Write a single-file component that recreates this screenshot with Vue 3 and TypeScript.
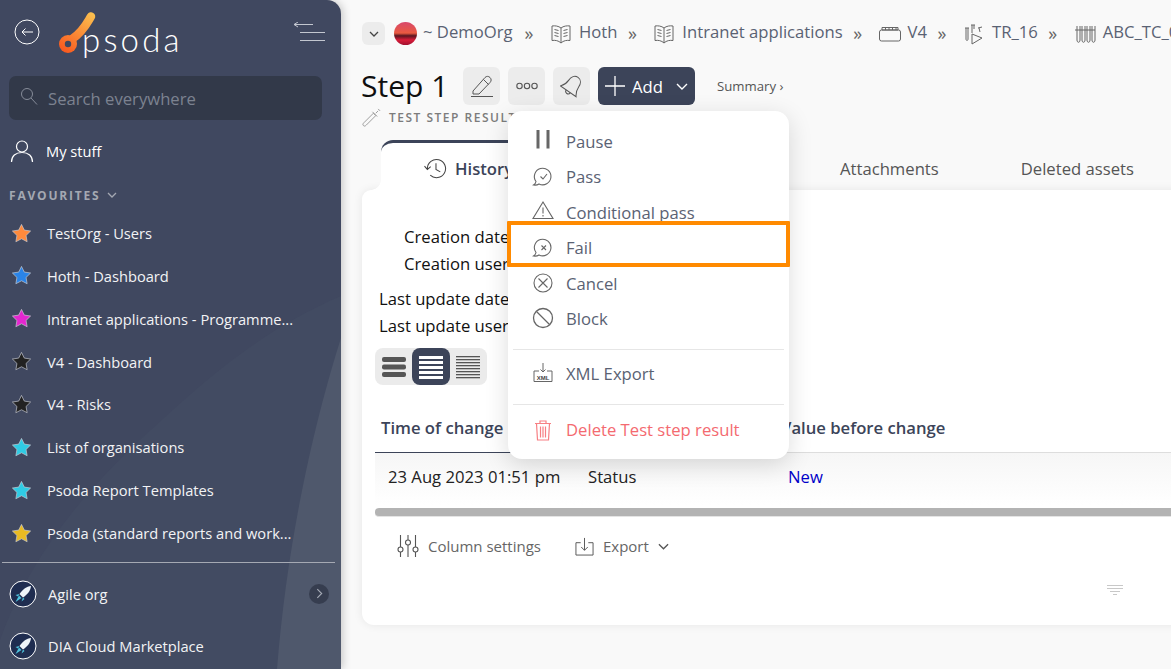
<script setup lang="ts">
interface Fav { label: string; color: string }
interface Crumb { label: string; icon: string }
interface MenuItem { label: string; icon: string }

const favourites: Fav[] = [
  { label: 'TestOrg - Users', color: '#ff8a3c' },
  { label: 'Hoth - Dashboard', color: '#2a84e8' },
  { label: 'Intranet applications - Programme...', color: '#e526d0' },
  { label: 'V4 - Dashboard', color: '#222222' },
  { label: 'V4 - Risks', color: '#222222' },
  { label: 'List of organisations', color: '#2fcbe4' },
  { label: 'Psoda Report Templates', color: '#2fcbe4' },
  { label: 'Psoda (standard reports and work...', color: '#eabb22' },
]
const crumbs: Crumb[] = [
  { label: 'Hoth', icon: 'book' },
  { label: 'Intranet applications', icon: 'book' },
  { label: 'V4', icon: 'box' },
  { label: 'TR_16', icon: 'run' },
  { label: 'ABC_TC_001', icon: 'tubes' },
]
const statusItems: MenuItem[] = [
  { label: 'Pause', icon: 'pause' },
  { label: 'Pass', icon: 'pass' },
  { label: 'Conditional pass', icon: 'warn' },
  { label: 'Fail', icon: 'fail' },
  { label: 'Cancel', icon: 'cancel' },
  { label: 'Block', icon: 'block' },
]
const orgs: string[] = ['Agile org', 'DIA Cloud Marketplace']
const starPath = 'M12 2.500L14.940 8.450L21.510 9.410L16.760 14.050L17.880 20.590L12 17.500L6.120 20.590L7.240 14.050L2.490 9.410L9.060 8.450Z'
const bubblePath = 'M5 16.500A8.300 8.300 0 1 1 8 19C6.500 20 4.500 20.300 2.500 20C4 19 4.800 18 5 16.500Z'
</script>

<template>
  <div class="page">
    <aside class="sidebar">
      <svg class="side-art" viewBox="0 0 341 669" aria-hidden="true">
        <path d="M341 296C250 335 190 395 140 440C70 505 25 570 0 640V669H341Z" fill="#424b62" />
        <path d="M341 338C318 410 288 530 277 669H341Z" fill="#4f586c" />
      </svg>
      <div class="side-content">
        <header class="brand">
          <svg class="back" viewBox="0 0 26 26" width="26" height="26">
            <circle cx="13" cy="13" r="12" fill="none" stroke="#fff" stroke-width="1" />
            <path d="M19 13H8M11.500 9.500L8 13l3.500 3.500" fill="none" stroke="#fff" stroke-width="1" />
          </svg>
          <div class="logo">
            <svg viewBox="0 0 40 46" width="40" height="46">
              <defs>
                <linearGradient id="logoGrad" gradientUnits="userSpaceOnUse" x1="34" y1="3" x2="6" y2="42">
                  <stop offset="0" stop-color="#fbc04f" />
                  <stop offset="1" stop-color="#f9591f" />
                </linearGradient>
              </defs>
              <path d="M33 6.500C29 13 25 22 14 29" fill="none" stroke="url(#logoGrad)" stroke-width="8.500" stroke-linecap="round" />
              <circle cx="10" cy="34" r="9" fill="url(#logoGrad)" />
              <circle cx="10" cy="34" r="3.200" fill="#404860" />
            </svg>
            <span class="wordmark">psoda</span>
          </div>
          <svg class="collapse" viewBox="0 0 32 20" width="32" height="20">
            <path d="M1 2.500H20M1 2.500l4-2.500M1 2.500l4 2.500M7 10.500H32M7 18.500H32" fill="none" stroke="#c3c7d0" stroke-width="1" />
          </svg>
        </header>

        <div class="search">
          <svg viewBox="0 0 18 18" width="18" height="18">
            <circle cx="7" cy="7" r="5.500" fill="none" stroke="#868c99" stroke-width="1" />
            <path d="M11 11l6 6.500" stroke="#868c99" stroke-width="1" />
          </svg>
          <span>Search everywhere</span>
        </div>

        <div class="mystuff">
          <svg viewBox="0 0 24 24" width="24" height="24">
            <circle cx="12" cy="7.500" r="5.500" fill="none" stroke="#fff" stroke-width="1.200" />
            <path d="M1.500 23c0-6 4-9.500 10.500-9.500S22.500 17 22.500 23" fill="none" stroke="#fff" stroke-width="1.200" />
          </svg>
          <span>My stuff</span>
        </div>

        <div class="fav-title">
          FAVOURITES
          <svg viewBox="0 0 10 6" width="10" height="6"><path d="M1 1l4 4 4-4" fill="none" stroke="#a4a8b2" stroke-width="1.300" /></svg>
        </div>

        <ul class="favs">
          <li v-for="f in favourites" :key="f.label">
            <svg viewBox="0 0 24 24" width="23" height="23">
              <path :d="starPath" :fill="f.color" stroke="#c9ccd3" stroke-width="0.700" stroke-linejoin="round" />
            </svg>
            <span>{{ f.label }}</span>
          </li>
        </ul>

        <div class="side-rule"></div>

        <div v-for="(o, i) in orgs" :key="o" class="org">
          <svg viewBox="0 0 28 28" width="28" height="28">
            <circle cx="14" cy="14" r="13" fill="#1f2d50" stroke="#fff" stroke-width="1" />
            <path d="M22 6c-4.500 .5-8 3-11.500 8l3.500 3.500c5-3.500 7.500-7 8-11.500z" fill="#eef4f8" />
            <path d="M10.500 14l-4 1 2.500 1.500zM14 17.500l-1.500 4 3-2.500zM10 15.500l2.500 2.500-6 4z" fill="#4ec3dd" />
          </svg>
          <span>{{ o }}</span>
          <span v-if="i === 0" class="org-more">
            <svg viewBox="0 0 8 12" width="7" height="11"><path d="M1.500 1l5 5-5 5" fill="none" stroke="#a6abb6" stroke-width="1.300" /></svg>
          </span>
        </div>
      </div>
    </aside>

    <main class="main">
      <nav class="crumbs">
        <button class="crumb-toggle" type="button">
          <svg viewBox="0 0 10 6" width="10" height="6"><path d="M1 1l4 4 4-4" fill="none" stroke="#444" stroke-width="1.300" /></svg>
        </button>
        <span class="org-avatar"></span>
        <span class="crumb-label first">~ DemoOrg</span>
        <template v-for="c in crumbs" :key="c.label">
          <span class="crumb-sep">»</span>
          <svg class="crumb-icon" viewBox="0 0 22 22" width="22" height="22" fill="none" stroke="#666" stroke-width="1">
            <template v-if="c.icon === 'book'">
              <path d="M11 5C8.500 3 5 2.500 2 3V17.500C5 17 8.500 17.500 11 20C13.500 17.500 17 17 20 17.500V3C17 2.500 13.500 3 11 5ZM11 5V20" />
              <path d="M4.500 6.500L8.500 7.500M4.500 9.500L8.500 10.500M4.500 12.500L8.500 13.500M17.500 6.500L13.500 7.500M17.500 9.500L13.500 10.500M17.500 12.500L13.500 13.500" />
            </template>
            <template v-else-if="c.icon === 'box'">
              <rect x="0.500" y="7" width="21" height="11" rx="2" />
              <path d="M3 4.500H19V7H3ZM6.500 4.500V7M10 4.500V7M13.500 4.500V7M17 4.500V7" />
            </template>
            <template v-else-if="c.icon === 'run'">
              <path d="M2 5H6M3 5V16C3 18 5 18 5 16V5M8 2H12M9 2V10M11 2V6M15 5L19 4M16 5L17 9" />
              <path d="M9 11V21L19 15Z" />
            </template>
            <template v-else>
              <path d="M1 7H21M3 3V17C3 20 6 20 6 17V3M8 3V17C8 20 11 20 11 17V3M13 3V17C13 20 16 20 16 17V3M18 3V17C18 20 21 20 21 17V3" />
            </template>
          </svg>
          <span class="crumb-label">{{ c.label }}</span>
        </template>
      </nav>

      <div class="title-row">
        <h1>Step 1</h1>
        <button class="tool first" type="button">
          <svg viewBox="0 0 24 24" width="24" height="24" fill="none" stroke="#555" stroke-width="1">
            <path d="M3 17L15 3.500C16.500 2 18.500 2 20 3.500C21.500 5 21.500 7 20 8.500L9 20H3ZM13.500 5.500L18.500 10.500M1 22.500H23" />
          </svg>
        </button>
        <button class="tool" type="button">
          <svg viewBox="0 0 22 8" width="22" height="8" fill="none" stroke="#555" stroke-width="1.100">
            <circle cx="3.500" cy="4" r="2.700" /><circle cx="11" cy="4" r="2.700" /><circle cx="18.500" cy="4" r="2.700" />
          </svg>
        </button>
        <button class="tool" type="button">
          <svg viewBox="0 0 24 24" width="24" height="24" fill="none" stroke="#555" stroke-width="1">
            <g transform="rotate(35 12 12)">
              <path d="M12 1.500C8 1.500 6 5 6 9C6 13.500 4.500 16 2.500 18.500H21.500C19.500 16 18 13.500 18 9C18 5 16 1.500 12 1.500Z" />
              <path d="M9.500 18.500C9.500 22 14.500 22 14.500 18.500" />
            </g>
          </svg>
        </button>
        <button class="add" type="button">
          <svg viewBox="0 0 20 20" width="20" height="20"><path d="M10 0V20M0 10H20" stroke="#fff" stroke-width="1.300" /></svg>
          <span>Add</span>
          <svg viewBox="0 0 12 7" width="12" height="7"><path d="M1 1l5 5 5-5" fill="none" stroke="#fff" stroke-width="1.400" /></svg>
        </button>
        <span class="summary">Summary ›</span>
      </div>

      <div class="subtitle">
        <svg viewBox="0 0 20 20" width="19" height="19" fill="none" stroke="#999" stroke-width="1">
          <path d="M1.500 18.500C.5 17.500 1 16.500 2 15.500L12 5.500L14.500 8L4.500 18C3.500 19 2.500 19.500 1.500 18.500ZM11 4L16 9M14.500 5.500L17 3M17 1L19 3" />
        </svg>
        <span>TEST STEP RESULT</span>
      </div>

      <div class="tabs">
        <div class="tab active">
          <svg viewBox="0 0 24 24" width="23" height="23" fill="none" stroke="#444" stroke-width="1.100">
            <path d="M3.500 12A9.500 9.500 0 1 1 6.500 19M.5 9.500L3.500 13L7 10M12.500 6.500V13L17 15.500" />
          </svg>
          <span>History</span>
        </div>
        <div class="tab-plain attach">Attachments</div>
        <div class="tab-plain deleted">Deleted assets</div>
      </div>

      <section class="card">
        <div class="facts">
          <div class="fact-group">
            <div>Creation date</div>
            <div>Creation user</div>
          </div>
          <div class="fact-group">
            <div>Last update date</div>
            <div>Last update user</div>
          </div>
        </div>

        <div class="density">
          <button type="button" class="d-btn">
            <svg viewBox="0 0 24 24" width="24" height="24" fill="#555"><rect y="2" width="24" height="5" rx="2" /><rect y="9.500" width="24" height="5" rx="2" /><rect y="17" width="24" height="5" rx="2" /></svg>
          </button>
          <button type="button" class="d-btn on">
            <svg viewBox="0 0 24 24" width="24" height="24" fill="#fff"><rect y="1" width="24" height="3" /><rect y="6" width="24" height="3" /><rect y="11" width="24" height="3" /><rect y="16" width="24" height="3" /><rect y="21" width="24" height="3" /></svg>
          </button>
          <button type="button" class="d-btn">
            <svg viewBox="0 0 24 24" width="24" height="24" fill="#555"><rect y="1" width="24" height="1.300" /><rect y="4" width="24" height="1.300" /><rect y="7" width="24" height="1.300" /><rect y="10" width="24" height="1.300" /><rect y="13" width="24" height="1.300" /><rect y="16" width="24" height="1.300" /><rect y="19" width="24" height="1.300" /><rect y="22" width="24" height="1.300" /></svg>
          </button>
        </div>

        <div class="thead">
          <div>Time of change</div>
          <div></div>
          <div>Value before change</div>
        </div>
        <div class="trow">
          <div>23 Aug 2023 01:51 pm</div>
          <div>Status</div>
          <div class="link">New</div>
        </div>
        <div class="scrollbar"></div>

        <div class="table-tools">
          <span class="tt settings">
            <svg viewBox="0 0 22 24" width="22" height="24" fill="none" stroke="#555" stroke-width="1.100">
              <path d="M3.500 1V13M3.500 18V23M11 1V6M11 11V23M18.500 1V13M18.500 18V23" />
              <circle cx="3.500" cy="15.500" r="2.500" /><circle cx="11" cy="8.500" r="2.500" /><circle cx="18.500" cy="15.500" r="2.500" />
            </svg>
            Column settings
          </span>
          <span class="tt">
            <svg viewBox="0 0 20 20" width="19" height="19" fill="none" stroke="#555" stroke-width="1">
              <path d="M6 6H1V19H19V6H14M10 1V14M6.500 10.500L10 14L13.500 10.500" />
            </svg>
            Export
            <svg viewBox="0 0 12 7" width="11" height="7"><path d="M1 1l5 5 5-5" fill="none" stroke="#555" stroke-width="1.400" /></svg>
          </span>
        </div>
        <div class="filter-row">
          <svg viewBox="0 0 16 12" width="16" height="12"><path d="M0 1.500H16M0 4.500H16M3 7.500H13M6 10.500H10" stroke="#c8c8c8" stroke-width="1" /></svg>
        </div>
      </section>

      <div class="menu">
        <div class="menu-group">
          <div v-for="m in statusItems" :key="m.label" class="menu-item">
            <svg class="menu-icon" viewBox="0 0 24 24" width="24" height="24" fill="none" stroke="#666" stroke-width="1.100">
              <path v-if="m.icon === 'pause'" d="M7 1V19.500M17 1V19.500" stroke-width="3" />
              <template v-else-if="m.icon === 'pass'">
                <path :d="bubblePath" />
                <path d="M9.500 11.500L12 14L16 9" />
              </template>
              <template v-else-if="m.icon === 'warn'">
                <path d="M12 2L22 18.500H2Z" />
                <path d="M12 7.500V13.500M12 15V16.500" />
              </template>
              <template v-else-if="m.icon === 'fail'">
                <path :d="bubblePath" />
                <path d="M10.500 9.500L15 14M15 9.500L10.500 14" />
              </template>
              <template v-else-if="m.icon === 'cancel'">
                <circle cx="12" cy="12" r="9" />
                <path d="M7.500 7.500L16.500 16.500M16.500 7.500L7.500 16.500" />
              </template>
              <template v-else>
                <circle cx="12" cy="12" r="9.500" stroke-width="1.300" />
                <path d="M5.500 5.500L18.500 18.500" stroke-width="1.300" />
              </template>
            </svg>
            <span>{{ m.label }}</span>
          </div>
        </div>
        <hr />
        <div class="menu-item solo">
          <svg class="menu-icon" viewBox="0 0 24 24" width="24" height="24" fill="none" stroke="#666" stroke-width="1">
            <path d="M8 9H3V19.500H21V9H16M12 1V10M9.500 7.500L12 10L14.500 7.500" />
            <text x="12" y="17.500" text-anchor="middle" font-size="6" font-weight="700" fill="#444" stroke="none" font-family="Liberation Sans, sans-serif">XML</text>
          </svg>
          <span>XML Export</span>
        </div>
        <hr />
        <div class="menu-item solo danger">
          <svg class="menu-icon" viewBox="0 0 24 24" width="24" height="24" fill="none" stroke="#f77f83" stroke-width="1.200">
            <path d="M4 5.500H20M9 5.500V3H15V5.500M5.500 5.500L6.500 22H17.500L18.500 5.500M9.500 8.500V19.500M12 8.500V19.500M14.500 8.500V19.500" />
          </svg>
          <span>Delete Test step result</span>
        </div>
      </div>
      <div class="highlight"></div>
    </main>
  </div>
</template>

<style scoped>
.page {
  position: relative;
  display: flex;
  width: 1171px;
  height: 669px;
  overflow: hidden;
  background: #f9f9f9;
  font-family: "Open Sans", "Liberation Sans", sans-serif;
}
.sidebar {
  position: relative;
  flex: 0 0 341px;
  height: 669px;
  overflow: hidden;
  background: #404860;
  border-top-right-radius: 14px;
  box-shadow: 2px 0 8px rgba(0, 0, 0, 0.2);
  z-index: 2;
  color: #fff;
}
.side-art {
  position: absolute;
  inset: 0;
  width: 341px;
  height: 669px;
}
.side-content {
  position: relative;
  display: flex;
  flex-direction: column;
}
.brand {
  display: flex;
  align-items: flex-start;
  height: 76px;
  padding: 19px 16px 0 14px;
  box-sizing: border-box;
}
.logo {
  display: flex;
  align-items: flex-start;
  margin: -9px 0 0 18px;
}
.wordmark {
  margin: 9px 0 0 -16px;
  font-family: Lato, "Open Sans", sans-serif;
  font-size: 33px;
  line-height: 40px;
  font-weight: 300;
  letter-spacing: 3.200px;
  color: #fff;
}
.collapse {
  margin: 3px 0 0 auto;
}
.search {
  display: flex;
  align-items: center;
  gap: 10px;
  height: 44px;
  margin: 0 19px 0 9px;
  padding-left: 11px;
  box-sizing: border-box;
  background: #323949;
  border-radius: 7px;
  font-size: 16.670px;
  color: #7c8290;
}
.search svg {
  flex: none;
  margin-top: -4px;
}
.mystuff {
  display: flex;
  align-items: center;
  gap: 12px;
  height: 24px;
  margin: 19px 0 0 10px;
  font-size: 14.670px;
  font-weight: 500;
}
.fav-title {
  display: flex;
  align-items: center;
  gap: 7px;
  margin: 23px 0 0 9px;
  height: 18px;
  font-size: 12px;
  font-weight: 700;
  letter-spacing: 1.800px;
  color: #a4a8b2;
}
.favs {
  list-style: none;
  margin: 7.600px 0 0;
  padding: 0;
}
.favs li {
  display: flex;
  align-items: center;
  gap: 14px;
  height: 42.860px;
  padding-left: 10px;
  font-size: 14.670px;
  color: #f2f3f5;
}
.side-rule {
  height: 1px;
  margin: 7.500px 6px 0 2px;
  background: #a5a9b3;
}
.org {
  display: flex;
  align-items: center;
  gap: 11px;
  height: 52px;
  padding: 0 12px 0 9px;
  font-size: 14.670px;
  color: #f2f3f5;
}
.side-rule + .org {
  margin-top: 5px;
}
.org-more {
  display: flex;
  align-items: center;
  justify-content: center;
  width: 20px;
  height: 20px;
  margin-left: auto;
  border-radius: 50%;
  background: #363d4f;
}

.main {
  position: relative;
  flex: 1 1 0;
  min-width: 0;
  overflow: hidden;
}
.crumbs {
  display: flex;
  align-items: center;
  height: 23px;
  margin: 22px 0 0 21px;
  white-space: nowrap;
  font-size: 16.670px;
  color: #5a6273;
}
.crumb-toggle {
  display: flex;
  align-items: center;
  justify-content: center;
  flex: none;
  width: 23px;
  height: 23px;
  padding: 0;
  border: 0;
  border-radius: 6px;
  background: #ececec;
}
.org-avatar {
  flex: none;
  width: 23px;
  height: 23px;
  margin-left: 9px;
  border-radius: 50%;
  background: linear-gradient(180deg, #d8486c 0%, #ea5a40 48%, #5a1520 60%, #d81c38 78%, #a01030 100%);
}
.crumb-label {
  flex: none;
  padding-bottom: 4px;
}
.crumb-label.first {
  margin: 0 1.500px 0 6px;
}
.crumb-sep {
  flex: none;
  margin: 0 16.500px 0 10.500px;
  padding-bottom: 2px;
  font-size: 18px;
  line-height: 20px;
  color: #666;
}
.crumb-icon {
  flex: none;
  margin-right: 7px;
}
.title-row {
  display: flex;
  align-items: center;
  height: 38px;
  margin: 22px 0 0 20px;
}
h1 {
  margin: 0;
  width: 102px;
  font-size: 30px;
  line-height: 38px;
  font-weight: 400;
  color: #0f0f0f;
}
.tool {
  display: flex;
  align-items: center;
  justify-content: center;
  width: 37px;
  height: 38px;
  margin-right: 8px;
  padding: 0;
  border: 0;
  border-radius: 6px;
  background: #ececec;
}
.add {
  display: flex;
  align-items: center;
  width: 97px;
  height: 38px;
  padding: 0 7px;
  box-sizing: border-box;
  border: 0;
  border-radius: 6px;
  background: #3c4459;
  color: #fff;
  font-family: inherit;
  font-size: 16.670px;
  font-weight: 500;
}
.add span {
  margin: 0 13px 0 7px;
}
.summary {
  margin-left: 22px;
  font-size: 13.200px;
  color: #555;
}
.subtitle {
  display: flex;
  align-items: center;
  gap: 8px;
  height: 20px;
  margin: 2px 0 0 21px;
  font-size: 12px;
  font-weight: 600;
  letter-spacing: 1.500px;
  color: #7c7c7c;
}
.tabs {
  position: relative;
  display: flex;
  align-items: flex-end;
  height: 50px;
  margin: 13px 0 0 40px;
  font-size: 16.670px;
}
.tab {
  position: relative;
  display: flex;
  align-items: center;
  gap: 8px;
  height: 50px;
  width: 220px;
  padding: 4px 0 0 43px;
  box-sizing: border-box;
  background: #fff;
  border-top: 3px solid #3c4459;
  border-radius: 12px 12px 0 0;
  font-weight: 600;
  color: #3c4459;
  z-index: 1;
}
.tab::before {
  content: "";
  position: absolute;
  left: -10px;
  bottom: 0;
  width: 10px;
  height: 10px;
  background: radial-gradient(circle at 0 0, transparent 9.500px, #ffffff 10px);
}
.tab-plain {
  height: 42px;
  line-height: 42px;
  color: #555;
}
.attach {
  margin-left: 239px;
}
.deleted {
  margin-left: 82px;
}
.card {
  width: 900px;
  height: 435px;
  margin-left: 21px;
  box-sizing: border-box;
  padding: 33px 0 0 13px;
  background: #fff;
  border-radius: 9px 0 0 12px;
  box-shadow: 0 0 10px rgba(0, 0, 0, 0.08);
}
.facts {
  width: 135px;
  font-size: 16.670px;
  font-weight: 500;
  line-height: 27px;
  text-align: left;
  color: #111;
  white-space: nowrap;
}
.fact-group {
  margin-bottom: 8px;
  padding-left: 4px;
}
.fact-group:first-child {
  padding-left: 29px;
}
.density {
  display: flex;
  width: 112px;
  height: 37px;
  margin-top: 9px;
  background: #ebebeb;
  border-radius: 8px;
}
.d-btn {
  display: flex;
  align-items: center;
  justify-content: center;
  flex: 1;
  padding: 0;
  border: 0;
  border-radius: 8px;
  background: transparent;
}
.d-btn.on {
  background: #3c4459;
}
.thead,
.trow {
  display: grid;
  grid-template-columns: 200px 200px 1fr;
  width: 800px;
}
.thead {
  margin-top: 26px;
  height: 42px;
  padding-bottom: 10px;
  box-sizing: border-box;
  align-items: center;
  background: linear-gradient(90deg, #3c4459 300px, #dddddd 300px) bottom / 100% 1px no-repeat;
  font-size: 16.670px;
  font-weight: 600;
  color: #3c4459;
}
.thead > div {
  padding-left: 6px;
}
.trow {
  height: 52px;
  align-items: center;
  padding-bottom: 6px;
  box-sizing: border-box;
  background: linear-gradient(180deg, #f6f6f6, #ffffff);
  font-size: 16.670px;
  color: #222;
}
.trow > div {
  padding-left: 13px;
}
.link {
  color: #0000c8;
}
.scrollbar {
  width: 800px;
  height: 8px;
  margin-top: 3px;
  background: #b3b3b3;
  border-radius: 4px 0 0 4px;
  border-bottom: 1px solid #e4e4e4;
  box-sizing: content-box;
}
.table-tools {
  display: flex;
  align-items: center;
  gap: 34px;
  margin: 17px 0 0 22px;
  height: 24px;
  font-size: 15px;
  color: #666;
}
.tt {
  display: flex;
  align-items: center;
  gap: 9px;
}
.filter-row {
  display: flex;
  justify-content: flex-end;
  width: 748px;
  margin-top: 26px;
}

.menu {
  position: absolute;
  left: 167px;
  top: 111px;
  width: 281px;
  height: 348px;
  box-sizing: border-box;
  padding: 12.800px 5px 0;
  background: #fff;
  border-radius: 14px;
  box-shadow: 0 6px 24px rgba(0, 0, 0, 0.14);
  z-index: 3;
  font-size: 16.670px;
  color: #5a6273;
}
.menu-item {
  display: flex;
  align-items: center;
  gap: 11px;
  height: 35.400px;
  padding-left: 18px;
}
.menu-icon {
  flex: none;
  width: 24px;
  height: 24px;
}
.menu hr {
  height: 1px;
  margin: 0;
  border: 0;
  background: #e6e6e6;
}
.menu-group {
  margin-bottom: 12.700px;
}
.menu-item.solo {
  margin: 4px 0 10px;
  height: 40px;
}
.menu-item.solo.danger {
  margin-top: 5px;
  color: #f46a70;
}
.highlight {
  position: absolute;
  left: 166px;
  top: 221px;
  width: 283px;
  height: 46px;
  box-sizing: border-box;
  border: 4px solid #ff8a00;
  border-radius: 1px;
  z-index: 4;
}
</style>
